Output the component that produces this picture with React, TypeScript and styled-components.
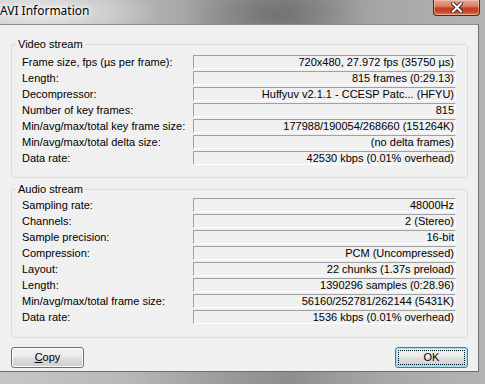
import React from 'react';
import styled, { createGlobalStyle } from 'styled-components';

// --- Global ---
const GlobalStyle = createGlobalStyle`
  html, body {
    margin: 0;
    padding: 0;
  }
  body {
    overflow: hidden;
    background: #9a9ea2;
    font-family: "Liberation Sans", Arial, sans-serif;
  }
`;

// --- Window chrome ---
const Window = styled.div`
  width: 485px;
  height: 384px;
  display: flex;
  flex-direction: column;
  background:
    radial-gradient(ellipse 90px 40px at 275px 14px, rgba(90, 90, 90, 0.55), rgba(90, 90, 90, 0) 100%),
    radial-gradient(ellipse 120px 30px at 40px 12px, rgba(235, 235, 235, 0.9), rgba(235, 235, 235, 0) 100%),
    linear-gradient(90deg, #c6c6c6 0%, #b9b9b9 25%, #9c9c9c 45%, #8e8e8e 60%, #a6a6a6 78%, #b4b4b4 100%);
`;

const TitleBar = styled.div`
  height: 24px;
  flex: none;
  display: flex;
  justify-content: space-between;
  align-items: flex-start;
`;

const Title = styled.span`
  font-family: "Noto Sans", "Open Sans", sans-serif;
  font-size: 12px;
  line-height: 22px;
  color: #000;
  text-shadow: 0 0 6px #fff, 0 0 10px #fff, 0 0 3px #fff;
`;

const CloseButton = styled.div`
  width: 47px;
  height: 16px;
  margin-right: 5px;
  box-sizing: border-box;
  border: 1px solid #5e2418;
  border-top: none;
  border-radius: 0 0 4px 4px;
  background: linear-gradient(#e6a694 0%, #d98069 40%, #c4401f 55%, #c9492a 80%, #e0866a 100%);
  box-shadow: inset 0 0 0 1px rgba(255, 220, 200, 0.45);
  display: flex;
  justify-content: center;
  align-items: center;
`;

const Client = styled.div`
  flex: 1;
  margin-right: 6px;
  margin-bottom: 12px;
  box-sizing: border-box;
  background: #f0f0f0;
  border-top: 1px solid #8c8c8c;
  border-right: 1px solid #6e6e6e;
  border-bottom: 1px solid #6e6e6e;
  padding: 13px 10px 0 11px;
  display: flex;
  flex-direction: column;
`;

// --- Group boxes ---
const GroupBox = styled.fieldset<{ $gap?: number; $top: number; $bottom: number }>`
  margin: ${p => p.$gap ?? 0}px 0 0 0;
  padding: ${p => p.$top}px 11px ${p => p.$bottom}px 4px;
  min-width: 0;
  border: 1px solid #d5dfe5;
  border-radius: 3px;
`;

const GroupTitle = styled.legend`
  padding: 0 2px;
  font-size: 11px;
  line-height: 13px;
  color: #000;
`;

const Rows = styled.div`
  margin-left: 6px;
  display: grid;
  grid-template-columns: 171px 1fr;
  row-gap: 2px;
`;

const Label = styled.div`
  font-size: 11px;
  line-height: 14px;
  height: 14px;
  color: #000;
  white-space: nowrap;
`;

const Value = styled.div`
  height: 14px;
  box-sizing: border-box;
  border-top: 1px solid #a0a0a0;
  border-left: 1px solid #a0a0a0;
  border-right: 1px solid #ffffff;
  border-bottom: 1px solid #ffffff;
  padding-right: 1px;
  font-size: 11px;
  line-height: 12px;
  text-align: right;
  white-space: nowrap;
  overflow: hidden;
  color: #000;
`;

// --- Buttons ---
const ButtonRow = styled.div`
  margin-top: 9px;
  display: flex;
  justify-content: space-between;
`;

const Button = styled.button<{ $default?: boolean }>`
  width: 73px;
  height: 21px;
  padding: 0;
  box-sizing: border-box;
  font-family: "Liberation Sans", Arial, sans-serif;
  font-size: 11px;
  color: #000;
  border: 1px solid ${p => (p.$default ? '#3c7fb1' : '#707070')};
  border-radius: 3px;
  background: linear-gradient(#f2f2f2 0%, #ebebeb 48%, #dddddd 52%, #cfcfcf 100%);
  box-shadow: inset 0 0 0 1px ${p => (p.$default ? '#9fdcf7' : '#fcfcfc')};
  display: flex;
  align-items: stretch;
`;

const FocusRing = styled.span<{ $show?: boolean }>`
  flex: 1;
  margin: 2px;
  border: 1px dotted ${p => (p.$show ? '#000' : 'transparent')};
  display: flex;
  align-items: center;
  justify-content: center;
  line-height: 13px;
`;

const videoRows: [string, string][] = [
  ['Frame size, fps (µs per frame):', '720x480, 27.972 fps (35750 µs)'],
  ['Length:', '815 frames (0:29.13)'],
  ['Decompressor:', 'Huffyuv v2.1.1 - CCESP Patc... (HFYU)'],
  ['Number of key frames:', '815'],
  ['Min/avg/max/total key frame size:', '177988/190054/268660 (151264K)'],
  ['Min/avg/max/total delta size:', '(no delta frames)'],
  ['Data rate:', '42530 kbps (0.01% overhead)'],
];

const audioRows: [string, string][] = [
  ['Sampling rate:', '48000Hz'],
  ['Channels:', '2 (Stereo)'],
  ['Sample precision:', '16-bit'],
  ['Compression:', 'PCM (Uncompressed)'],
  ['Layout:', '22 chunks (1.37s preload)'],
  ['Length:', '1390296 samples (0:28.96)'],
  ['Min/avg/max/total frame size:', '56160/252781/262144 (5431K)'],
  ['Data rate:', '1536 kbps (0.01% overhead)'],
];

const InfoGroup: React.FC<{
  title: string;
  rows: [string, string][];
  gap?: number;
  top: number;
  bottom: number;
}> = ({ title, rows, gap, top, bottom }) => (
  <GroupBox $gap={gap} $top={top} $bottom={bottom}>
    <GroupTitle>{title}</GroupTitle>
    <Rows>
      {rows.map(([label, value], i) => (
        <React.Fragment key={i}>
          <Label>{label}</Label>
          <Value>{value}</Value>
        </React.Fragment>
      ))}
    </Rows>
  </GroupBox>
);

const App: React.FC = () => {
  return (
    <>
      <GlobalStyle />
      <Window>
        <TitleBar>
          <Title>AVI Information</Title>
          <CloseButton>
            <svg width="12" height="11" viewBox="0 0 12 11">
              <path d="M2 1.5 L10 9.5 M10 1.5 L2 9.5" stroke="#3a2a26" strokeWidth="4" strokeLinecap="square" />
              <path d="M2 1.5 L10 9.5 M10 1.5 L2 9.5" stroke="#ffffff" strokeWidth="2" strokeLinecap="square" />
            </svg>
          </CloseButton>
        </TitleBar>
        <Client>
          <InfoGroup title="Video stream" rows={videoRows} top={4} bottom={12} />
          <InfoGroup title="Audio stream" rows={audioRows} gap={5} top={2} bottom={13} />
          <ButtonRow>
            <Button>
              <FocusRing>
                <span><u>C</u>opy</span>
              </FocusRing>
            </Button>
            <Button $default>
              <FocusRing $show>OK</FocusRing>
            </Button>
          </ButtonRow>
        </Client>
      </Window>
    </>
  );
};

export default App;
